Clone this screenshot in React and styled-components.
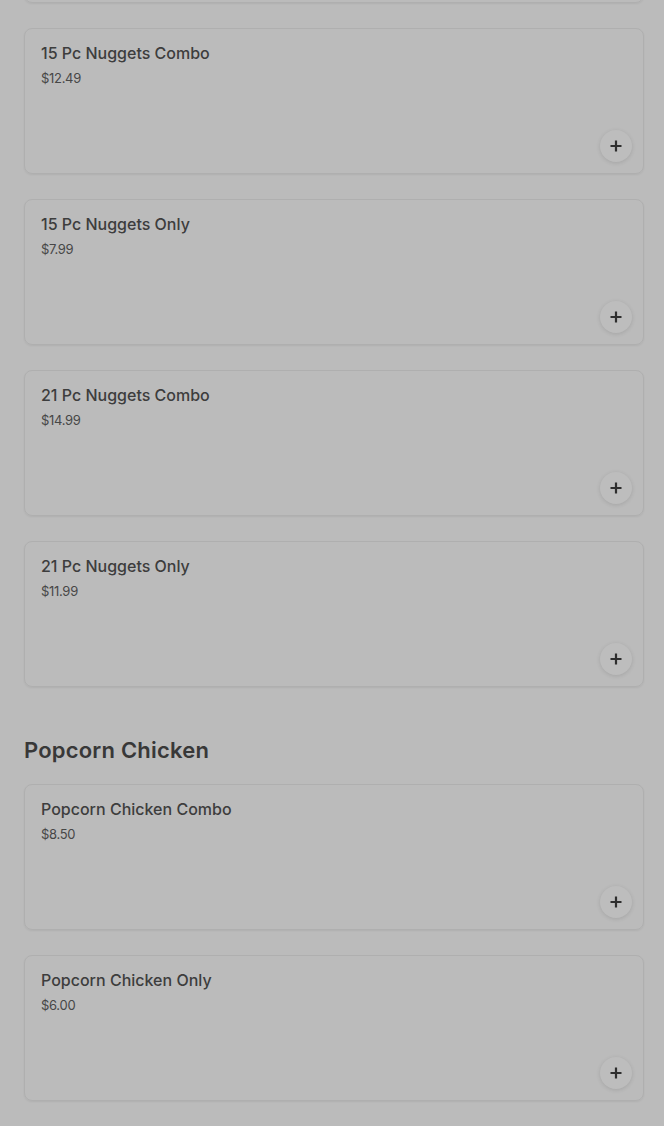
import React from 'react';
import styled, { createGlobalStyle } from 'styled-components';

const Global = createGlobalStyle`
  html, body {
    margin: 0;
    padding: 0;
    background: #bbbbbb;
    overflow: hidden;
  }
  body {
    font-family: Inter, "Open Sans", sans-serif;
    color: #3a3a3a;
  }
`;

const Page = styled.main`
  height: 1126px;
  overflow: hidden;
  padding: 0 20px 0 24px;
`;

const Section = styled.section`
  display: flex;
  flex-direction: column;
  gap: 25px;
  margin-top: ${p => p.offset || 0}px;
`;

const Heading = styled.h2`
  margin: 49px 0 -5px;
  font-family: Inter, sans-serif;
  font-size: 22px;
  line-height: 28px;
  font-weight: 600;
  color: #383838;
  letter-spacing: 0.2px;
`;

const Card = styled.article`
  box-sizing: border-box;
  height: 146px;
  border: 1px solid #afafaf;
  border-radius: 8px;
  box-shadow: 0 1px 2px rgba(0, 0, 0, 0.06);
  padding: 13px 11px 11px 16px;
  display: flex;
  flex-direction: column;
`;

const Title = styled.div`
  font-size: 16px;
  line-height: 22px;
  font-weight: 500;
  color: #3d3d3d;
`;

const Price = styled.div`
  margin-top: 5px;
  font-size: 13px;
  line-height: 18px;
  color: #474747;
  letter-spacing: -0.3px;
`;

const AddButton = styled.button`
  margin-top: auto;
  align-self: flex-end;
  width: 32px;
  height: 32px;
  border-radius: 50%;
  border: none;
  background: #bdbdbd;
  box-shadow: 0 1px 4px rgba(0, 0, 0, 0.12);
  display: flex;
  align-items: center;
  justify-content: center;
  padding: 0;
  color: #2e2e2e;
`;

const PlusIcon = () => (
  <svg width="14" height="14" viewBox="0 0 14 14">
    <path d="M7 1.5v11M1.5 7h11" stroke="currentColor" strokeWidth="2.2" strokeLinecap="butt" />
  </svg>
);

const nuggets = [
  { name: '15 Pc Nuggets Combo', price: '$12.49' },
  { name: '15 Pc Nuggets Only', price: '$7.99' },
  { name: '21 Pc Nuggets Combo', price: '$14.99' },
  { name: '21 Pc Nuggets Only', price: '$11.99' },
];

const popcorn = [
  { name: 'Popcorn Chicken Combo', price: '$8.50' },
  { name: 'Popcorn Chicken Only', price: '$6.00' },
];

function Item({ name, price }) {
  return (
    <Card>
      <Title>{name}</Title>
      <Price>{price}</Price>
      <AddButton aria-label="Add">
        <PlusIcon />
      </AddButton>
    </Card>
  );
}

export default function App() {
  return (
    <>
      <Global />
      <Page>
        <Section offset={-143}>
          {/* previous item, scrolled out of view except its bottom edge */}
          <Card />
          {nuggets.map(i => <Item key={i.name} {...i} />)}
        </Section>
        <Section>
          <Heading>Popcorn Chicken</Heading>
          {popcorn.map(i => <Item key={i.name} {...i} />)}
        </Section>
      </Page>
    </>
  );
}
